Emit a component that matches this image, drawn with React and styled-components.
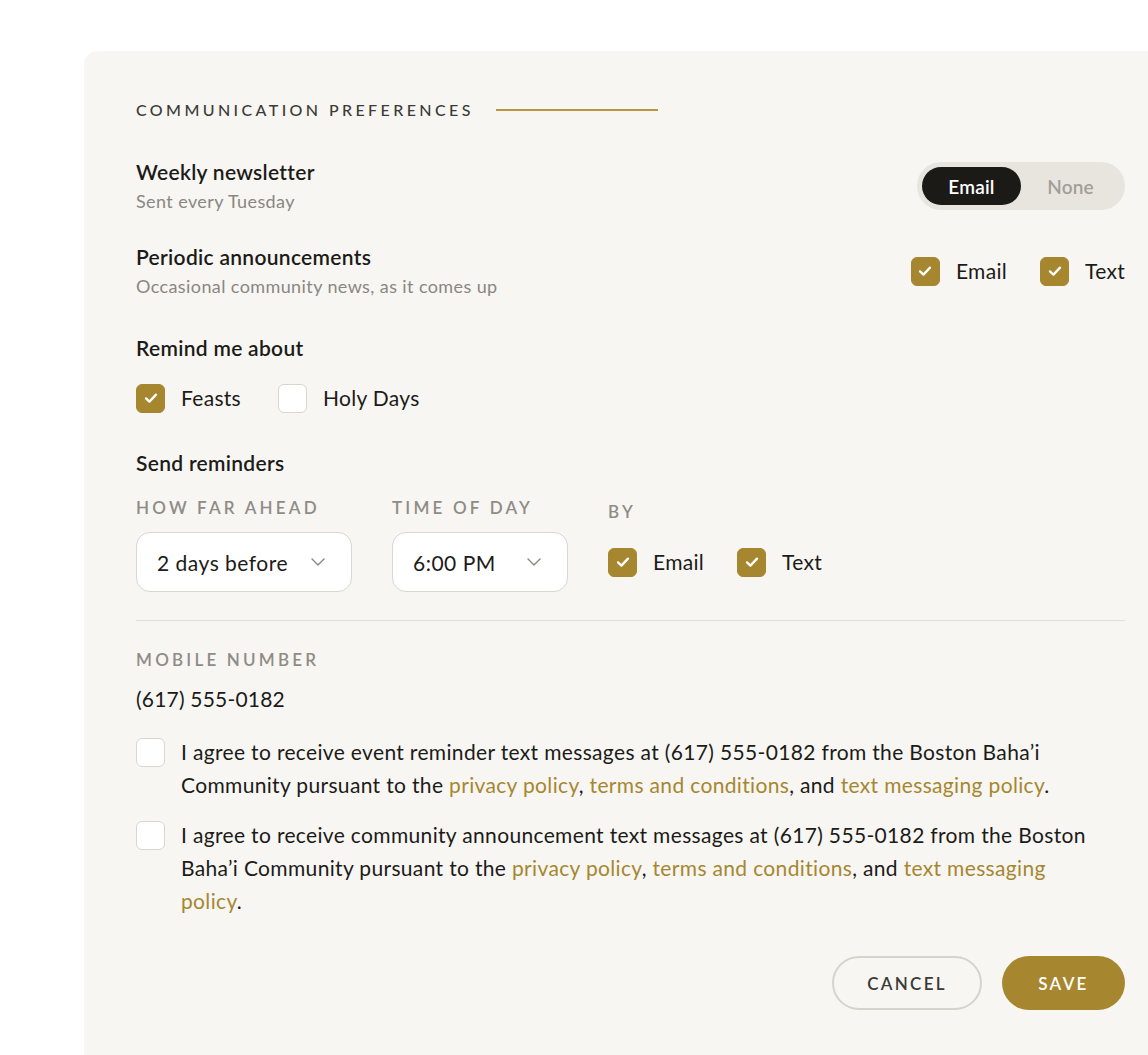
import React, { useState } from "react";
import styled, { createGlobalStyle } from "styled-components";

const GOLD = "#a6872f";

const GlobalStyle = createGlobalStyle`
  html, body { margin: 0; padding: 0; background: #ffffff; overflow: hidden; }
  body { font-family: "Lato", "Noto Sans", sans-serif; color: #1c1b18; -webkit-font-smoothing: antialiased; }
  * { box-sizing: border-box; }
`;

const Page = styled.div`
  padding: 51px 0 0 84px;
  width: 1148px;
  height: 1055px;
  overflow: hidden;
`;

const Card = styled.section`
  width: 1093px;
  min-height: 1060px;
  background: #f7f6f3;
  border-radius: 14px 14px 0 0;
  padding: 49px 52px 60px;
  display: flex;
  flex-direction: column;
`;

const Header = styled.div`
  display: flex;
  align-items: center;
  gap: 22px;
`;

const Title = styled.h2`
  margin: 0;
  font-size: 16px;
  line-height: 20px;
  font-weight: 500;
  letter-spacing: 3.4px;
  color: #3b3a36;
`;

const Rule = styled.span`
  display: block;
  width: 162px;
  height: 2px;
  background: #b8973e;
`;

const Row = styled.div`
  display: flex;
  align-items: center;
  justify-content: space-between;
  margin-top: ${(p) => p.$mt}px;
`;

const Block = styled.div`
  display: flex;
  flex-direction: column;
  margin-top: ${(p) => p.$mt || 0}px;
`;

const Name = styled.div`
  font-size: 21px;
  line-height: 26px;
  font-weight: 600;
  letter-spacing: 0.3px;
  color: #1c1b18;
`;

const Sub = styled.div`
  font-size: 18px;
  line-height: 24px;
  letter-spacing: 0.4px;
  margin-top: 4px;
  color: #8a8782;
`;

const Toggle = styled.div`
  display: flex;
  width: 208px;
  height: 48px;
  padding: 5px;
  border-radius: 24px;
  background: #e8e5df;
`;

const ToggleOpt = styled.button`
  flex: ${(p) => (p.$active ? "0 0 99px" : "1")};
  border: 0;
  border-radius: 19px;
  background: ${(p) => (p.$active ? "#1b1a17" : "transparent")};
  color: ${(p) => (p.$active ? "#ffffff" : "#a19e98")};
  font-family: inherit;
  font-size: 19px;
  font-weight: 600;
  letter-spacing: 0.2px;
  cursor: pointer;
`;

const Checks = styled.div`
  display: flex;
  align-items: center;
  gap: ${(p) => p.$gap || 33}px;
  margin-top: ${(p) => p.$mt || 0}px;
`;

const CheckLabel = styled.label`
  display: flex;
  align-items: center;
  gap: 16px;
  font-size: 21px;
  line-height: 30px;
  letter-spacing: 0.3px;
  color: #1c1b18;
  cursor: pointer;
`;

const Box = styled.span`
  flex: 0 0 29px;
  width: 29px;
  height: 29px;
  border-radius: 6px;
  display: flex;
  align-items: center;
  justify-content: center;
  background: ${(p) => (p.$on ? GOLD : "#ffffff")};
  border: 1.5px solid ${(p) => (p.$on ? GOLD : "#d9d6cf")};
  margin-top: ${(p) => p.$mt || 0}px;
`;

const Check = ({ on, children }) => {
  const [v, setV] = useState(on);
  return (
    <CheckLabel onClick={() => setV(!v)}>
      <Box $on={v}>
        {v && (
          <svg width="16" height="16" viewBox="0 0 16 16" fill="none">
            <path d="M3 8.4 L6.4 11.6 L13 4.6" stroke="#fff" strokeWidth="2.3" strokeLinecap="round" strokeLinejoin="round" />
          </svg>
        )}
      </Box>
      {children}
    </CheckLabel>
  );
};

const Fields = styled.div`
  display: flex;
  align-items: flex-start;
  gap: 40px;
  margin-top: 22px;
`;

const Field = styled.div`
  display: flex;
  flex-direction: column;
  gap: 14px;
`;

const Caps = styled.div`
  font-size: 17px;
  line-height: 20px;
  font-weight: 600;
  letter-spacing: 3.2px;
  color: #8f8c86;
  text-transform: uppercase;
  margin-top: ${(p) => p.$mt || 0}px;
`;

const Select = styled.div`
  width: ${(p) => p.$w}px;
  height: 60px;
  background: #ffffff;
  border: 1.5px solid #d9d6cf;
  border-radius: 14px;
  display: flex;
  align-items: center;
  justify-content: space-between;
  padding: 0 26px 0 20px;
  font-size: 21px;
  letter-spacing: 0.5px;
  color: #1c1b18;
`;

const Chevron = () => (
  <svg width="14" height="8" viewBox="0 0 14 8" fill="none">
    <path d="M1 1 L7 7 L13 1" stroke="#8a8782" strokeWidth="1.4" strokeLinecap="round" strokeLinejoin="round" />
  </svg>
);

const ByChecks = styled.div`
  height: 60px;
  display: flex;
  align-items: center;
  gap: 33px;
  margin-top: -4px;
`;

const Divider = styled.hr`
  margin: 28px 0 0;
  border: 0;
  height: 1px;
  background: #e2dfd8;
`;

const Phone = styled.div`
  font-size: 21px;
  line-height: 26px;
  letter-spacing: 0.2px;
  margin-top: 16px;
`;

const Consent = styled.label`
  display: flex;
  align-items: flex-start;
  gap: 16px;
  margin-top: ${(p) => p.$mt}px;
  font-size: 21px;
  line-height: 33px;
  letter-spacing: 0.34px;
  color: #1c1b18;
`;

const ConsentText = styled.span`
  max-width: 916px;
`;

const Link = styled.a`
  color: ${GOLD};
  text-decoration: none;
`;

const Actions = styled.div`
  display: flex;
  justify-content: flex-end;
  gap: 20px;
  margin-top: 39px;
`;

const Btn = styled.button`
  height: 54px;
  width: ${(p) => p.$w}px;
  border-radius: 27px;
  font-family: inherit;
  font-size: 17px;
  font-weight: 600;
  letter-spacing: 2.3px;
  cursor: pointer;
  background: ${(p) => (p.$primary ? GOLD : "transparent")};
  color: ${(p) => (p.$primary ? "#ffffff" : "#3b3a36")};
  border: ${(p) => (p.$primary ? "0" : "2px solid #d6d3cc")};
`;

export default function App() {
  const [nl, setNl] = useState("Email");
  return (
    <>
      <GlobalStyle />
      <Page>
        <Card>
          <Header>
            <Title>COMMUNICATION PREFERENCES</Title>
            <Rule />
          </Header>

          <Row $mt={39}>
            <Block>
              <Name>Weekly newsletter</Name>
              <Sub>Sent every Tuesday</Sub>
            </Block>
            <Toggle>
              <ToggleOpt $active={nl === "Email"} onClick={() => setNl("Email")}>Email</ToggleOpt>
              <ToggleOpt $active={nl === "None"} onClick={() => setNl("None")}>None</ToggleOpt>
            </Toggle>
          </Row>

          <Row $mt={31}>
            <Block>
              <Name>Periodic announcements</Name>
              <Sub>Occasional community news, as it comes up</Sub>
            </Block>
            <Checks>
              <Check on>Email</Check>
              <Check on>Text</Check>
            </Checks>
          </Row>

          <Block $mt={37}>
            <Name>Remind me about</Name>
            <Checks $mt={22} $gap={37}>
              <Check on>Feasts</Check>
              <Check>Holy Days</Check>
            </Checks>
          </Block>

          <Block $mt={37}>
            <Name>Send reminders</Name>
            <Fields>
              <Field>
                <Caps>How far ahead</Caps>
                <Select $w={216}>
                  2 days before <Chevron />
                </Select>
              </Field>
              <Field>
                <Caps>Time of day</Caps>
                <Select $w={176}>
                  6:00 PM <Chevron />
                </Select>
              </Field>
              <Field>
                <Caps $mt={4}>By</Caps>
                <ByChecks>
                  <Check on>Email</Check>
                  <Check on>Text</Check>
                </ByChecks>
              </Field>
            </Fields>
          </Block>

          <Divider />

          <Caps $mt={29}>Mobile number</Caps>
          <Phone>(617) 555-0182</Phone>

          <Consent $mt={23}>
            <Box $mt={3} />
            <ConsentText>
              I agree to receive event reminder text messages at (617) 555-0182 from the Boston Baha’i Community
              pursuant to the <Link href="#">privacy policy</Link>, <Link href="#">terms and conditions</Link>, and{" "}
              <Link href="#">text messaging policy</Link>.
            </ConsentText>
          </Consent>

          <Consent $mt={17}>
            <Box $mt={3} />
            <ConsentText>
              I agree to receive community announcement text messages at (617) 555-0182 from the Boston Baha’i
              Community pursuant to the <Link href="#">privacy policy</Link>, <Link href="#">terms and conditions</Link>,
              and <Link href="#">text messaging policy</Link>.
            </ConsentText>
          </Consent>

          <Actions>
            <Btn $w={150}>CANCEL</Btn>
            <Btn $primary $w={123}>SAVE</Btn>
          </Actions>
        </Card>
      </Page>
    </>
  );
}
